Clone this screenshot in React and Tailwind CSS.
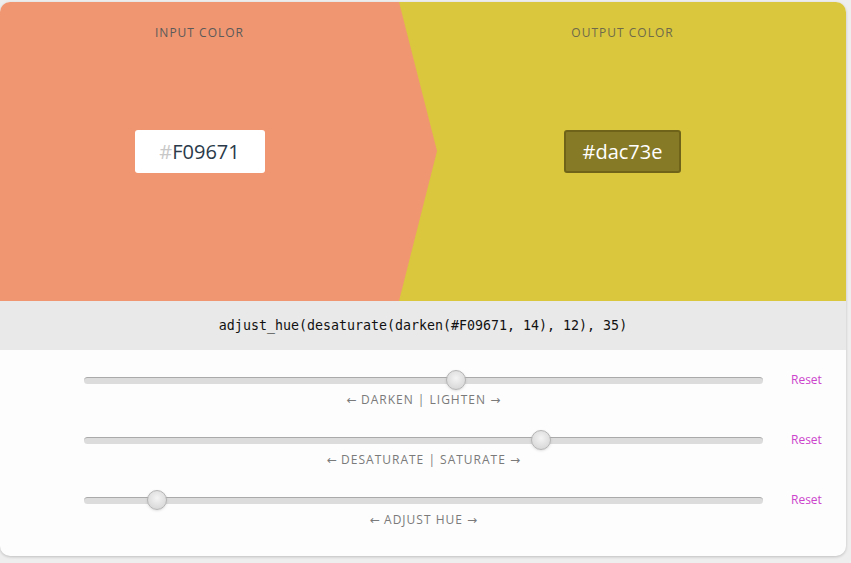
import React from "react";

const sliders = [
  { left: "DARKEN | LIGHTEN", pos: 54.8 },
  { left: "DESATURATE | SATURATE", pos: 67.3 },
  { left: "ADJUST HUE", pos: 10.8 },
];

function Slider({ text, pos }) {
  return (
    <div className="flex items-start pl-[84px]">
      <div className="w-[679px]">
        <div className="relative h-5 flex items-center">
          <div className="w-full h-[7px] rounded-full bg-[#dcdcdc] border-t border-[#aaaaaa]" />
          <div
            className="absolute top-0 w-5 h-5 -ml-[10px] rounded-full border border-[#b5b5b5] bg-[radial-gradient(circle_at_50%_40%,#f4f4f4,#d0d0d0)] shadow-sm"
            style={{ left: `${pos}%` }}
          />
        </div>
        <div className="mt-[2px] text-center text-[12px] leading-4 tracking-[1px] text-[#7a7a7a] font-['Open_Sans',sans-serif]">
          <span className="font-['DejaVu_Sans',sans-serif] tracking-normal">←</span> {text}{" "}
          <span className="font-['DejaVu_Sans',sans-serif] tracking-normal">→</span>
        </div>
      </div>
      <a className="ml-[28px] h-5 flex items-center text-[12px] text-[#cc44cc] font-['Open_Sans',sans-serif] cursor-pointer">
        Reset
      </a>
    </div>
  );
}

export default function App() {
  return (
    <div className="min-h-screen bg-[#eeeeee] pt-[2px]">
      <div className="w-[846px] rounded-[10px] overflow-hidden bg-[#fdfdfd] shadow-[0_1px_3px_rgba(0,0,0,0.2)]">
        {/* Color panels */}
        <div className="relative flex h-[299px]">
          <div className="w-[399px] bg-[#F09671] flex flex-col items-center pt-[23px]">
            <div className="text-[12px] leading-4 tracking-[1px] text-[#5a5a5a] font-['Open_Sans',sans-serif]">
              INPUT COLOR
            </div>
            <div className="mt-[89px] w-[130px] h-[43px] rounded-[3px] bg-white flex items-center justify-center text-[20px] text-[#2a3a4a] font-['Open_Sans',sans-serif]">
              <span className="text-[#c8c8c8]">#</span>F09671
            </div>
          </div>
          <div className="flex-1 bg-[#dac73e] flex flex-col items-center pt-[23px]">
            <div className="text-[12px] leading-4 tracking-[1px] text-[#6e6a4a] font-['Open_Sans',sans-serif]">
              OUTPUT COLOR
            </div>
            <div className="mt-[89px] w-[117px] h-[43px] rounded-[3px] bg-[#867a26] border-2 border-[#6e6318] flex items-center justify-center text-[20px] text-white font-['Open_Sans',sans-serif]">
              #dac73e
            </div>
          </div>
          <svg className="absolute left-[399px] top-0" width="40" height="299" viewBox="0 0 40 299">
            <polygon points="0,0 38,149 0,299" fill="#F09671" />
          </svg>
        </div>

        {/* Formula */}
        <div className="h-[49px] bg-[#e9e9e9] flex items-center justify-center text-[13.3px] text-[#111] font-['DejaVu_Sans_Mono',monospace]">
          adjust_hue(desaturate(darken(#F09671, 14), 12), 35)
        </div>

        {/* Sliders */}
        <div className="pt-[20px] pb-[28px] flex flex-col gap-[22px]">
          {sliders.map((s) => (
            <Slider key={s.left} text={s.left} pos={s.pos} />
          ))}
        </div>
      </div>
    </div>
  );
}
